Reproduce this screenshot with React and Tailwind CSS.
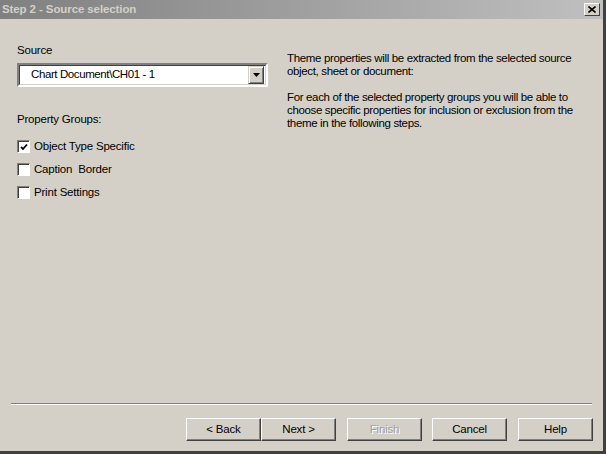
import React from 'react';

const font = { fontFamily: '"Liberation Sans", Arial, sans-serif' };

function Check({ checked, label }) {
  return (
    <div className="flex items-center h-[13px] gap-[4px]">
      <div className="w-[13px] h-[13px] bg-white border border-t-[#808080] border-l-[#808080] border-b-white border-r-white flex items-center justify-center shadow-[inset_1px_1px_0_#404040]">
        {checked && (
          <svg width="9" height="9" viewBox="0 0 9 9" className="ml-[1px] mt-[1px]">
            <path d="M1 4 L3 6 L7 1.5" stroke="#000" strokeWidth="1.8" fill="none" />
          </svg>
        )}
      </div>
      <span className="text-[11.5px] text-black leading-none whitespace-pre tracking-[-0.2px]">{label}</span>
    </div>
  );
}

function Btn({ children, disabled }) {
  return (
    <button
      className="w-[75px] h-[23px] bg-[#d4d0c8] border border-t-white border-l-white border-r-[#404040] border-b-[#404040] shadow-[inset_-1px_-1px_0_#808080] text-[11.5px] tracking-[-0.2px] leading-none flex items-center justify-center"
      style={font}
    >
      <span className={disabled ? 'text-[#a0a0a0] [text-shadow:1px_1px_0_#fff]' : 'text-black'}>{children}</span>
    </button>
  );
}

export default function App() {
  return (
    <div className="w-[606px] h-[454px] bg-[#d4d0c8] flex flex-col border-r-[3px] border-b-[3px] border-[#404040]" style={font}>
      <div className="h-[19px] flex items-center justify-between pl-[2px] pr-[3px] bg-gradient-to-r from-[#808080] to-[#c0c0c0]">
        <span className="text-[11.5px] font-bold text-[#d4d0c8] tracking-[-0.1px]">Step 2 - Source selection</span>
        <div className="w-[16px] h-[13px] bg-[#d4d0c8] border border-t-white border-l-white border-r-[#404040] border-b-[#404040] flex items-center justify-center">
          <svg width="8" height="7" viewBox="0 0 8 7">
            <path d="M0.5 0.5 L7.5 6.5 M7.5 0.5 L0.5 6.5" stroke="#000" strokeWidth="1.6" />
          </svg>
        </div>
      </div>

      <div className="flex-1 flex flex-col">
        <div className="flex pt-[24px]">
          <div className="w-[270px] pl-[17px] flex flex-col">
            <div className="text-[11.5px] tracking-[-0.2px] leading-[14px] text-black">Source</div>
            <div className="mt-[6px] w-[251px] h-[24px] border-2 border-t-[#808080] border-l-[#808080] border-b-white border-r-white">
              <div className="h-full bg-white flex items-center border border-t-[#404040] border-l-[#404040] border-b-[#d4d0c8] border-r-[#d4d0c8]">
                <span className="flex-1 pl-[11px] text-[11.5px] tracking-[-0.4px] text-black">Chart Document\CH01 - 1</span>
                <div className="w-[16px] h-[18px] mr-[1px] bg-[#d4d0c8] border border-t-[#d4d0c8] border-l-[#d4d0c8] border-r-[#404040] border-b-[#404040] shadow-[inset_1px_1px_0_#fff,inset_-1px_-1px_0_#808080] flex items-center justify-center">
                  <svg width="7" height="4" viewBox="0 0 7 4">
                    <path d="M0 0 H7 L3.5 4 Z" fill="#000" />
                  </svg>
                </div>
              </div>
            </div>
            <div className="mt-[25px] text-[11.5px] tracking-[-0.2px] leading-[14px] text-black">Property Groups:</div>
            <div className="mt-[14px] flex flex-col gap-[10px]">
              <Check checked label="Object Type Specific" />
              <Check label="Caption  Border" />
              <Check label="Print Settings" />
            </div>
          </div>
          <div className="ml-[17px] pt-[9px] w-[300px] text-[11.5px] tracking-[-0.35px] leading-[13px] text-black">
            <p>Theme properties will be extracted from the selected source object, sheet or document:</p>
            <p className="mt-[13px]">For each of the selected property groups you will be able to choose specific properties for inclusion or exclusion from the theme in the following steps.</p>
          </div>
        </div>

        <div className="mt-auto mx-[11px] border-t border-t-[#808080] border-b border-b-white" />

        <div className="flex justify-end pr-[10px] pt-[13px] pb-[10px]">
          <Btn>&lt; Back</Btn>
          <Btn>Next &gt;</Btn>
          <div className="ml-[11px]"><Btn disabled>Finish</Btn></div>
          <div className="ml-[10px]"><Btn>Cancel</Btn></div>
          <div className="ml-[11px]"><Btn>Help</Btn></div>
        </div>
      </div>
    </div>
  );
}
